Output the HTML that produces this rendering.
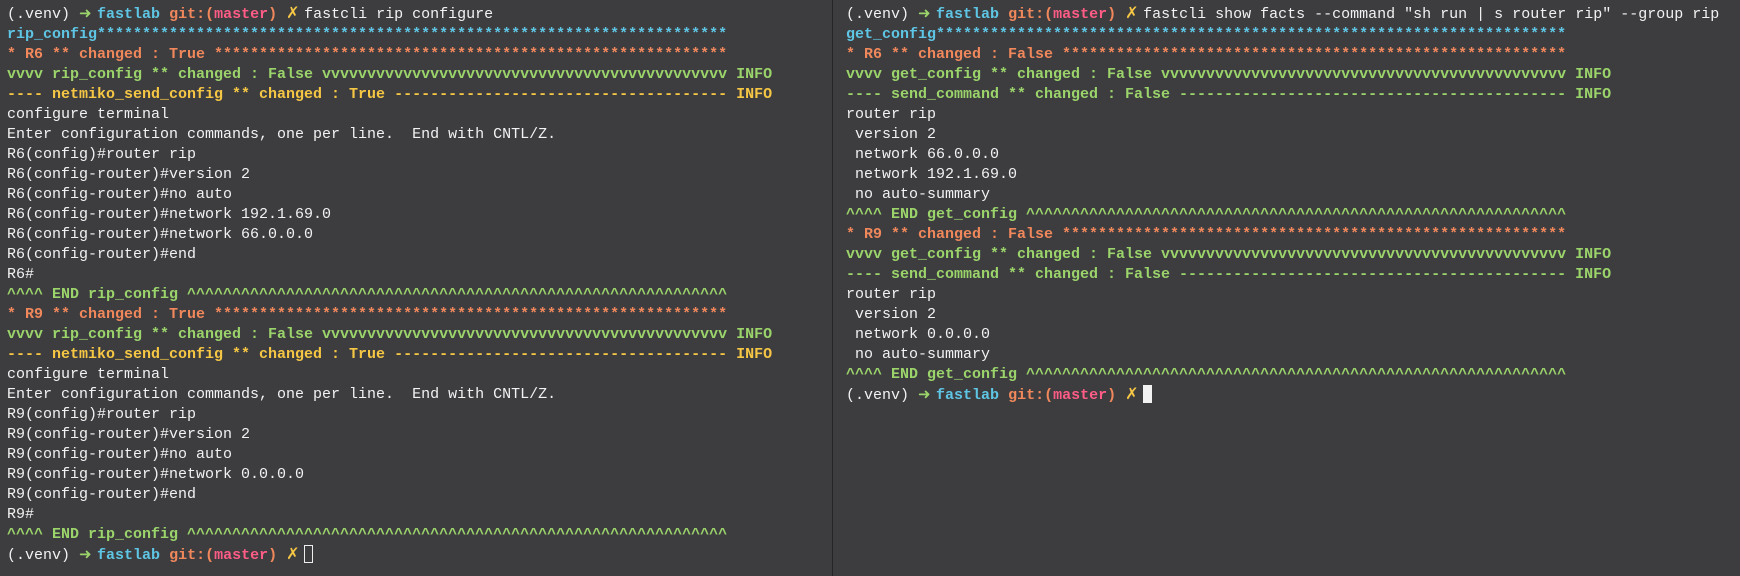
<!DOCTYPE html>
<html><head><meta charset="utf-8"><style>
html,body{margin:0;padding:0;background:#3d3c3f;width:1740px;height:576px;overflow:hidden}
.pane{position:absolute;top:5px;font-family:"Liberation Mono","DejaVu Sans Mono",monospace;font-size:15px;line-height:20px;color:#f2f2f2;white-space:pre}
#l{left:7px}#r{left:846px}
#div{position:absolute;left:832px;top:0;width:1px;height:576px;background:#252427}
.c{color:#5ec6e4;font-weight:bold}.o{color:#f0885c;font-weight:bold}.g{color:#9bd46b;font-weight:bold}.y{color:#f6c744;font-weight:bold}.p{color:#ff5c86;font-weight:bold}
.ar,.x{display:inline-block;width:9px;text-align:center;overflow:visible;font-family:"DejaVu Sans",sans-serif;line-height:15px;vertical-align:baseline}
.ar{font-size:15px}.x{font-size:16px}
.f{display:inline-block;width:80ch;overflow:hidden;vertical-align:top}
.ln{height:20px;overflow:hidden}
.cur1{display:inline-block;width:9px;height:18px;border:1px solid #eee;vertical-align:-4px;box-sizing:border-box}
.cur2{display:inline-block;width:9px;height:18px;background:#f2f2f2;vertical-align:-4px}
</style></head><body>
<div id="div"></div>
<div class="pane" id="l"><div class="ln">(.venv) <span class="g ar">➜</span> <span class="c">fastlab</span> <span class="o">git:(</span><span class="p">master</span><span class="o">)</span> <span class="y x">✗</span> fastcli rip configure</div><div class="ln c"><span class="f">rip_config****************************************************************************************************</span></div><div class="ln o"><span class="f">* R6 ** changed : True ****************************************************************************************************</span></div><div class="ln g"><span class="f">vvvv rip_config ** changed : False vvvvvvvvvvvvvvvvvvvvvvvvvvvvvvvvvvvvvvvvvvvvvvvvvvvvvvvvvvvvvvvvvvvvvvvvvvv</span> INFO</div><div class="ln y"><span class="f">---- netmiko_send_config ** changed : True ----------------------------------------------------------------------------</span> INFO</div><div class="ln">configure terminal</div><div class="ln">Enter configuration commands, one per line.  End with CNTL/Z.</div><div class="ln">R6(config)#router rip</div><div class="ln">R6(config-router)#version 2</div><div class="ln">R6(config-router)#no auto</div><div class="ln">R6(config-router)#network 192.1.69.0</div><div class="ln">R6(config-router)#network 66.0.0.0</div><div class="ln">R6(config-router)#end</div><div class="ln">R6#</div><div class="ln g"><span class="f">^^^^ END rip_config ^^^^^^^^^^^^^^^^^^^^^^^^^^^^^^^^^^^^^^^^^^^^^^^^^^^^^^^^^^^^^^^^^^^^^^^^^^^^^^^^^^^^^</span></div><div class="ln o"><span class="f">* R9 ** changed : True ****************************************************************************************************</span></div><div class="ln g"><span class="f">vvvv rip_config ** changed : False vvvvvvvvvvvvvvvvvvvvvvvvvvvvvvvvvvvvvvvvvvvvvvvvvvvvvvvvvvvvvvvvvvvvvvvvvvv</span> INFO</div><div class="ln y"><span class="f">---- netmiko_send_config ** changed : True ----------------------------------------------------------------------------</span> INFO</div><div class="ln">configure terminal</div><div class="ln">Enter configuration commands, one per line.  End with CNTL/Z.</div><div class="ln">R9(config)#router rip</div><div class="ln">R9(config-router)#version 2</div><div class="ln">R9(config-router)#no auto</div><div class="ln">R9(config-router)#network 0.0.0.0</div><div class="ln">R9(config-router)#end</div><div class="ln">R9#</div><div class="ln g"><span class="f">^^^^ END rip_config ^^^^^^^^^^^^^^^^^^^^^^^^^^^^^^^^^^^^^^^^^^^^^^^^^^^^^^^^^^^^^^^^^^^^^^^^^^^^^^^^^^^^^</span></div><div class="ln">(.venv) <span class="g ar">➜</span> <span class="c">fastlab</span> <span class="o">git:(</span><span class="p">master</span><span class="o">)</span> <span class="y x">✗</span> <span class="cur1"></span></div></div>
<div class="pane" id="r"><div class="ln">(.venv) <span class="g ar">➜</span> <span class="c">fastlab</span> <span class="o">git:(</span><span class="p">master</span><span class="o">)</span> <span class="y x">✗</span> fastcli show facts --command "sh run | s router rip" --group rip</div><div class="ln c"><span class="f">get_config****************************************************************************************************</span></div><div class="ln o"><span class="f">* R6 ** changed : False ****************************************************************************************************</span></div><div class="ln g"><span class="f">vvvv get_config ** changed : False vvvvvvvvvvvvvvvvvvvvvvvvvvvvvvvvvvvvvvvvvvvvvvvvvvvvvvvvvvvvvvvvvvvvvvvvvvv</span> INFO</div><div class="ln g"><span class="f">---- send_command ** changed : False ----------------------------------------------------------------------------</span> INFO</div><div class="ln">router rip</div><div class="ln"> version 2</div><div class="ln"> network 66.0.0.0</div><div class="ln"> network 192.1.69.0</div><div class="ln"> no auto-summary</div><div class="ln g"><span class="f">^^^^ END get_config ^^^^^^^^^^^^^^^^^^^^^^^^^^^^^^^^^^^^^^^^^^^^^^^^^^^^^^^^^^^^^^^^^^^^^^^^^^^^^^^^^^^^^</span></div><div class="ln o"><span class="f">* R9 ** changed : False ****************************************************************************************************</span></div><div class="ln g"><span class="f">vvvv get_config ** changed : False vvvvvvvvvvvvvvvvvvvvvvvvvvvvvvvvvvvvvvvvvvvvvvvvvvvvvvvvvvvvvvvvvvvvvvvvvvv</span> INFO</div><div class="ln g"><span class="f">---- send_command ** changed : False ----------------------------------------------------------------------------</span> INFO</div><div class="ln">router rip</div><div class="ln"> version 2</div><div class="ln"> network 0.0.0.0</div><div class="ln"> no auto-summary</div><div class="ln g"><span class="f">^^^^ END get_config ^^^^^^^^^^^^^^^^^^^^^^^^^^^^^^^^^^^^^^^^^^^^^^^^^^^^^^^^^^^^^^^^^^^^^^^^^^^^^^^^^^^^^</span></div><div class="ln">(.venv) <span class="g ar">➜</span> <span class="c">fastlab</span> <span class="o">git:(</span><span class="p">master</span><span class="o">)</span> <span class="y x">✗</span> <span class="cur2"></span></div></div>
</body></html>
